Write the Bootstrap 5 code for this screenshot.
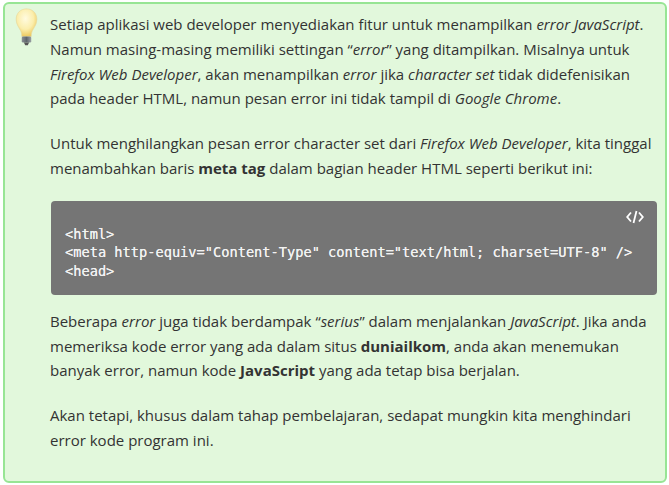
<!DOCTYPE html>
<html lang="id"><head><meta charset="utf-8"><title>Catatan</title>
<link href="https://cdn.jsdelivr.net/npm/bootstrap@5.3.0/dist/css/bootstrap.min.css" rel="stylesheet">
<style>
html,body{background:#fff;overflow:hidden}
body{font-family:"Open Sans",sans-serif;font-size:15px;line-height:24.8px;color:#333;padding:2px 2px 0 3px}
.tip-box{position:relative;background:#e2f8dc;border:2px solid #97e594;border-radius:6px;height:481px;padding:8px 10px 0 45px}
.tip-box p{margin:0 0 20px}
.bulb{position:absolute;left:10px;top:4px}
.code-box{position:relative;background:#757575;border-radius:4px;height:94px;margin:0 0 14px 1px;padding:24px 14px 0;color:#f2f2f2;font-family:"DejaVu Sans Mono",monospace;font-weight:400;font-size:13.67px;line-height:18.5px;white-space:pre;width:606px;text-shadow:0 0 .6px #f2f2f2}
.code-tag{position:absolute;right:13px;top:9px;display:block}
.code-box code{color:inherit;font:inherit;font-size:inherit}
</style></head><body>
<div class="tip-box">
<svg class="bulb" width="23" height="38" viewBox="0 0 26 44"><defs><radialGradient id="g" cx=".45" cy=".35" r=".65"><stop offset="0" stop-color="#fffbe0"/><stop offset=".6" stop-color="#fbeeac"/><stop offset="1" stop-color="#ecc95f"/></radialGradient><linearGradient id="m" x1="0" x2="1"><stop offset="0" stop-color="#8a8f94"/><stop offset=".5" stop-color="#5f666c"/><stop offset="1" stop-color="#9aa0a4"/></linearGradient></defs><path d="M13 1C6 1 1 6 1 13c0 6 3 9 5 13 1 2 1.500 4 1.500 7h11c0-3 .5-5 1.500-7 2-4 5-7 5-13C25 6 20 1 13 1z" fill="url(#g)" stroke="#e6d9a0" stroke-width=".7"/><rect x="7.500" y="33" width="11" height="7" rx="1.500" fill="url(#m)"/><path d="M10 40h6l-1.500 3h-3z" fill="#555"/></svg>
<p>Setiap aplikasi web developer menyediakan fitur untuk menampilkan <i>error JavaScript</i>. Namun masing-masing memiliki settingan “<i>error</i>” yang ditampilkan. Misalnya untuk <i>Firefox Web Developer</i>, akan menampilkan <i>error</i> jika <i>character set</i> tidak didefenisikan pada header HTML, namun pesan error ini tidak tampil di <i>Google Chrome</i>.</p>
<p>Untuk menghilangkan pesan error character set dari <i>Firefox Web Developer</i>, kita tinggal menambahkan baris <b>meta tag</b> dalam bagian header HTML seperti berikut ini:</p>
<div class="code-box"><svg class="code-tag" width="18" height="14" viewBox="0 0 18 14" fill="none" stroke="#fff" stroke-width="1.800"><path d="M5 2.500 1.200 7 5 11.500M13 2.500 16.800 7 13 11.500M10.500 1 7.500 13"/></svg><code>&lt;html&gt;
&lt;meta http-equiv="Content-Type" content="text/html; charset=UTF-8" /&gt;
&lt;head&gt;</code></div>
<p>Beberapa <i>error</i> juga tidak berdampak “<i>serius</i>” dalam menjalankan <i>JavaScript</i>. Jika anda memeriksa kode error yang ada dalam situs <b>duniailkom</b>, anda akan menemukan banyak error, namun kode <b>JavaScript</b> yang ada tetap bisa berjalan.</p>
<p>Akan tetapi, khusus dalam tahap pembelajaran, sedapat mungkin kita menghindari error kode program ini.</p>
</div>
</body></html>
